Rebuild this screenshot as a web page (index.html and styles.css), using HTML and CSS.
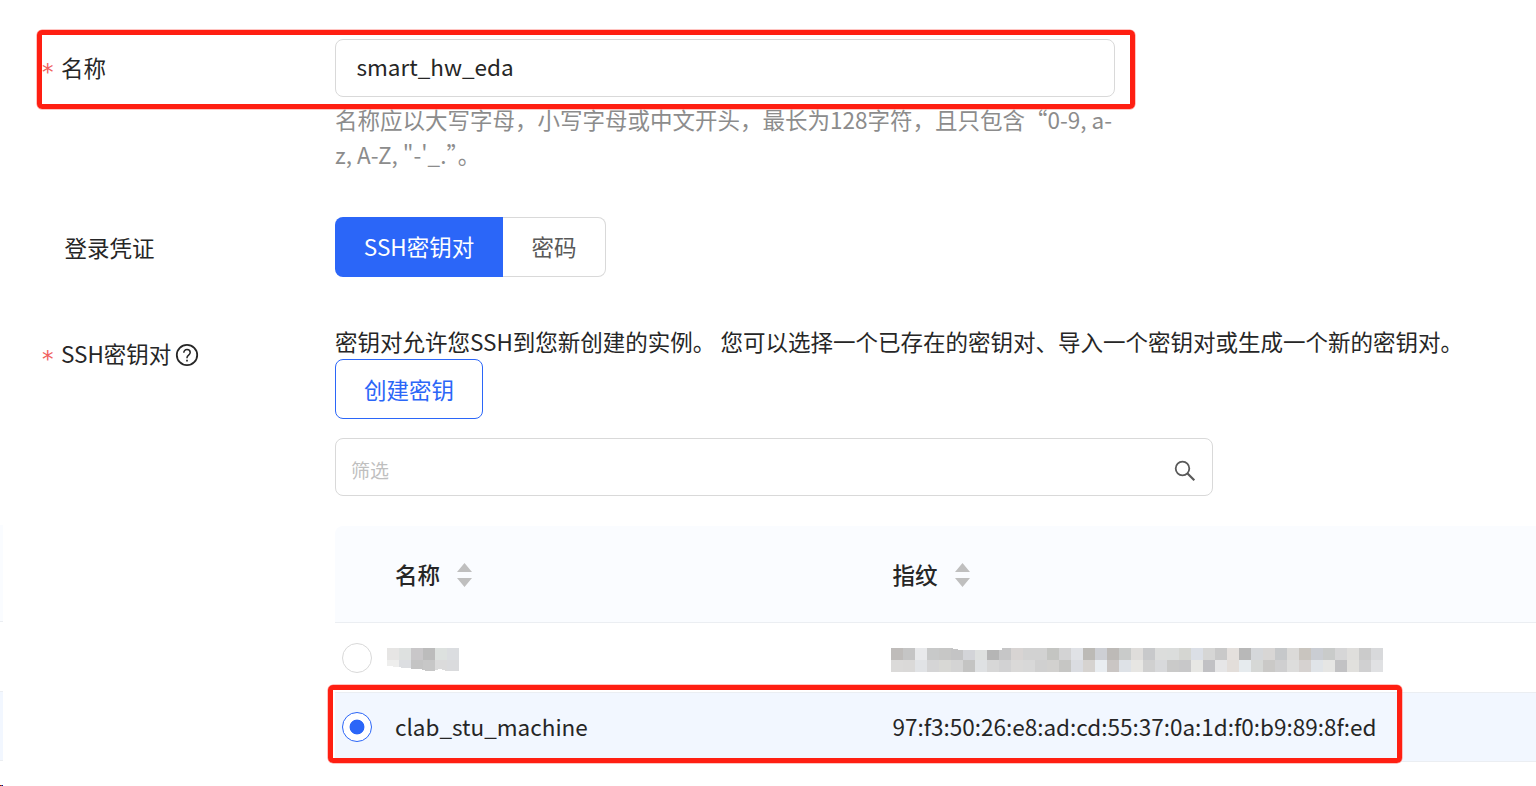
FILE: index.html
```
<!DOCTYPE html>
<html lang="zh-CN">
<head>
<meta charset="utf-8">
<title>创建实例</title>
<link rel="stylesheet" href="styles.css">
</head>
<body>
<main class="form">
  <div class="row row-name">
    <div class="label"><span class="star">*</span><span>名称</span></div>
    <div class="control">
      <div class="input">smart_hw_eda</div>
      <div class="help">名称应以大写字母，小写字母或中文开头，最长为128字符，且只包含“0-9, a-<br>z, A-Z, "-'_.”。</div>
    </div>
  </div>
  <div class="row row-login">
    <div class="label plain">登录凭证</div>
    <div class="segments">
      <div class="segment active">SSH密钥对</div>
      <div class="segment">密码</div>
    </div>
  </div>
  <div class="row row-key">
    <div class="label"><span class="star">*</span><span>SSH密钥对</span>
      <svg class="question" viewBox="0 0 24 24" width="24" height="24" fill="none" stroke="#262626"><circle cx="12" cy="12" r="10.2" stroke-width="1.8"/><path d="M8.8 9.8C8.8 7.8 10.1 6.6 12 6.6s3.2 1.2 3.2 3c0 2.300-3.200 2.700-3.200 5.100v.5" stroke-width="1.5"/><path d="M12 16.700v1.800" stroke-width="1.700"/></svg>
    </div>
    <div class="control">
      <div class="desc">密钥对允许您SSH到您新创建的实例。 您可以选择一个已存在的密钥对、导入一个密钥对或生成一个新的密钥对。</div>
      <div class="button">创建密钥</div>
      <div class="search"><span>筛选</span>
        <svg viewBox="0 0 22 22" width="22" height="22" fill="none" stroke="#595959"><circle cx="8.500" cy="8.500" r="6.800" stroke-width="1.800"/><path d="M13.300 13.300l7 6.900" stroke-width="2.200"/></svg>
      </div>
      <div class="table">
        <div class="tr head">
          <div class="pick"></div>
          <div class="name">名称<svg class="sort" width="15" height="24" viewBox="0 0 15 24" fill="#bfbfbf"><path d="M7.500 0L15 9H0zM0 15h15l-7.500 9z"/></svg></div>
          <div class="print">指纹<svg class="sort" width="15" height="24" viewBox="0 0 15 24" fill="#bfbfbf"><path d="M7.500 0L15 9H0zM0 15h15l-7.500 9z"/></svg></div>
        </div>
        <div class="tr">
          <div class="pick"><span class="radio"></span></div>
          <div class="name"><svg class="mosaic" id="mask-name" width="72" height="24" shape-rendering="crispEdges"></svg></div>
          <div class="print"><svg class="mosaic wide" id="mask-print" width="492" height="24" shape-rendering="crispEdges"></svg></div>
        </div>
        <div class="tr selected">
          <div class="pick"><span class="radio on"></span></div>
          <div class="name">clab_stu_machine</div>
          <div class="print">97:f3:50:26:e8:ad:cd:55:37:0a:1d:f0:b9:89:8f:ed</div>
        </div>
      </div>
    </div>
  </div>
  <div class="edge"><div class="edge-head"></div><div class="edge-row"></div><div class="edge-row blue"></div></div>
  <div class="dots"></div>
  <div class="frame frame-name"></div>
  <div class="frame frame-key"></div>
</main>
<script src="mosaic.js"></script>
</body>
</html>
```
FILE: styles.css
```
* { box-sizing: border-box; }
body {
  margin: 0;
  background: #fff;
  color: #262626;
  font-family: "Noto Sans CJK SC", sans-serif;
  font-size: 22.5px;
  line-height: 35px;
}
.form { position: relative; width: 1536px; height: 786px; padding-top: 39px; overflow: hidden; }
.row { display: grid; grid-template-columns: 335px 1fr; align-items: start; }
.label { display: flex; align-items: center; height: 56px; padding-left: 42px; white-space: nowrap; }
.label.plain { padding-left: 64.5px; height: 60px; }
.star { width: 19px; padding-top: 11px; color: #f0615f; font-size: 23px; font-family: "DejaVu Sans", sans-serif; }
.question { margin: 3px 0 0 4px; }
.row-name { height: 178px; }
.row-login { height: 108px; }
.input, .search { display: flex; align-items: center; height: 58px; border: 1px solid #d9d9d9; border-radius: 8px; }
.input { width: 780px; padding: 0 0 3px 20.5px; }
.help { margin-top: 5px; color: #8c8c8c; white-space: nowrap; }
.segments { display: flex; height: 60px; }
.segment { display: flex; align-items: center; justify-content: center; width: 103px; padding-bottom: 2px; border: 1px solid #d9d9d9; border-left: 0; border-radius: 0 8px 8px 0; color: #595959; }
.segment.active { width: 168px; background: #2b66f8; color: #fff; border: 0; border-radius: 8px 0 0 8px; }
.row-key .label { height: 57px; }
.desc { height: 34px; line-height: 33px; white-space: nowrap; }
.button { display: flex; align-items: center; justify-content: center; width: 148px; height: 60px; border: 1px solid #2b66f8; border-radius: 8px; color: #2b66f8; }
.search { justify-content: space-between; width: 878px; margin-top: 19px; padding: 5px 16px 0 15px; color: #bfbfbf; font-size: 19px; }
.search span { padding-bottom: 1px; }
.search svg { margin-top: 2px; }
.table { margin-top: 30px; }
.tr { display: grid; grid-template-columns: 60px 497px 1fr; align-items: center; height: 70px; border-bottom: 1px solid #ebeef2; }
.tr.head { height: 97px; background: #fafcff; border-top-left-radius: 8px; font-weight: 500; }
.tr.selected { height: 69px; background: #f2f7ff; }
.tr.selected .name, .tr.selected .print { padding-bottom: 2px; }
.name { padding-left: 0; }
.print { padding-left: .5px; }
.name, .print { display: flex; align-items: center; }
.sort { margin: 1px 0 0 17px; }
.pick { padding-left: 7px; }
.radio { display: block; width: 30px; height: 30px; border: 1px solid #d9d9d9; border-radius: 50%; background: #fff; }
.radio.on { border-color: #2b66f8; background: radial-gradient(circle, #2b66f8 7px, #fff 7.8px); }
.mosaic { margin: 4px 0 0 -8px; }
.mosaic.wide { margin-left: -1.5px; }
.edge { position: absolute; left: 0; top: 525px; width: 3px; }
.edge-head { height: 97px; background: #fafcff; border-bottom: 1px solid #ebeef2; }
.edge-row { height: 70px; border-bottom: 1px solid #ebeef2; }
.edge-row.blue { height: 69px; background: #f2f7ff; }
.dots { position: absolute; left: 0; top: 785px; width: 3px; height: 1px; background: linear-gradient(90deg, #b00000 1px, #507050 1px 2px, #0000a0 2px); }
.frame { position: absolute; border: 5px solid #ff1f12; border-radius: 5px; box-shadow: 0 0 0 .5px #ff8a83; }
.frame-name { left: 37px; top: 30px; width: 1098px; height: 79px; }
.frame-key { left: 328px; top: 685px; width: 1074px; height: 78px; }
```
FILE: mosaic.js
```
// Redacted cells: 12px blocks, one list per row of blocks.
const NS = 'http://www.w3.org/2000/svg';
function shape(svg, tag, attrs) {
  const el = document.createElementNS(NS, tag);
  for (const key in attrs) el.setAttribute(key, attrs[key]);
  svg.appendChild(el);
}
function mosaic(id, rows, notch) {
  const svg = document.getElementById(id);
  rows.forEach((row, y) => row.split(' ').forEach((color, x) =>
    shape(svg, 'rect', { x: x * 12, y: y * 12, width: 12, height: 12, fill: '#' + color })));
  shape(svg, 'path', { d: notch, fill: '#fff' });
}
mosaic('mask-name', [
  'e6e5e4 dee1e0 c9c7c9 bcbcbc dde1df dbdde0',
  'eeeeed dcdee1 c4c4c4 c7c7c7 dbdbdb dadbdd'
], 'M0 18h6v1h8v1h10v1h11v1h3v1h10v-1h3v-1h4v1h3v1h14v1H0z');
mosaic('mask-print', [
  'bfbcba c5c5c5 e8e9eb c8c9c9 c7c7c6 c4c4c5 d3d4d8 dee0df b5b5b5 c6c6c7 d8d4d3 d2d2d2 d2d2d2 c4c5c2 d3d3d4 e0e2e6 bcbab6 cdcfd4 bdbab7 c9cbca dfdddb c8c9cb dcdddc dbdddc d5d6d2 dbdfe6 d6d6d5 c9c9c9 e4e0dd b8b8b8 d5d7da d8d6d5 c6c8ca dbdad8 c9c5bf cacdd3 c9cbca d6d6d7 dfdedc cbcbcb d8d9db',
  'dbdad9 dad9d8 e1e3e6 d5d5d6 d8d8d5 d4d4d4 c4c4c3 dfe1e3 d7d7d7 d2d2d3 dad9d8 d8d8d8 d0d0d0 d2d1cf c6c6c4 dadce1 d6d3d0 e9edf1 cac6c4 dee2e7 e7e6e3 d0d0d0 d8d9db cacac9 c8c8c9 e7e7e4 c1c1c4 e6e6e7 e3deda e6ebee d6d8d6 cac9c7 cfcfd0 dddddc d6d2d0 e0e4e8 e6e6e4 c2c2c4 e1e0dd d0d0d1 e0e1e3'
], 'M62 0h49v2H67V1h-5z');
```
